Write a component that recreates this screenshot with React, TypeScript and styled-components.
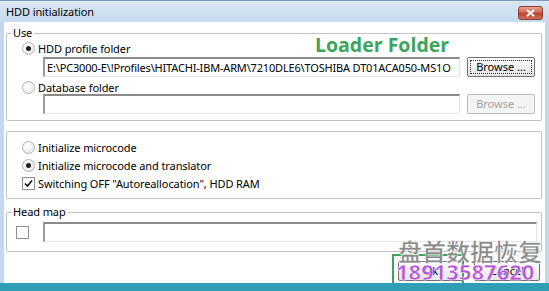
import React from "react";
import styled, { createGlobalStyle } from "styled-components";

const GlobalStyle = createGlobalStyle`
  html, body {
    margin: 0;
    padding: 0;
    background: #ffffff;
  }
  body {
    font-family: "Noto Sans", "Liberation Sans", sans-serif;
    font-size: 11px;
    color: #000;
  }
`;

const Window = styled.div`
  position: relative;
  width: 549px;
  height: 291px;
  box-sizing: border-box;
  display: flex;
  flex-direction: column;
  background: #c3d8ec;
  border-bottom: 8px solid #2f9fb6;
  overflow: hidden;
`;

const TitleBar = styled.div`
  height: 22px;
  flex: none;
  display: flex;
  align-items: center;
  justify-content: space-between;
  padding: 0 6px;
  background: linear-gradient(#d9e6f4, #c6daee);
  border-top: 1px solid #7f9db9;
  box-sizing: border-box;
`;

const Title = styled.div`
  font-size: 11px;
  letter-spacing: -0.1px;
  color: #000;
`;

const CloseButton = styled.div`
  width: 25px;
  height: 14px;
  margin-top: 3px;
  border: 1px solid #8a3a2e;
  border-radius: 3px;
  background: linear-gradient(#e8a493, #c9604a 50%, #b8402a 51%, #d0735c);
  display: flex;
  align-items: center;
  justify-content: center;
  box-sizing: border-box;
`;

const Client = styled.div`
  flex: 1;
  margin: 0 4px;
  padding: 4px 3px 0 2px;
  background: #ffffff;
  display: flex;
  flex-direction: column;
`;

const Group = styled.fieldset<{ $top?: number }>`
  margin: ${(p) => p.$top ?? 0}px 0 0 0;
  padding: 0;
  border: 1px solid #c2c2c2;
  border-radius: 2px;
  min-width: 0;
`;

const Legend = styled.legend`
  margin-left: 4px;
  padding: 0 2px;
  line-height: 14px;
  font-size: 11px;
  letter-spacing: -0.1px;
`;

const GroupBody = styled.div<{ $pad: string }>`
  display: flex;
  flex-direction: column;
  padding: ${(p) => p.$pad};
`;

const OptionRow = styled.div<{ $h: number }>`
  display: flex;
  align-items: center;
  gap: 3px;
  height: ${(p) => p.$h}px;
  font-size: 11px;
  letter-spacing: -0.1px;
  white-space: nowrap;
`;

const RadioMark = styled.span<{ $checked?: boolean }>`
  position: relative;
  width: 13px;
  height: 13px;
  flex: none;
  box-sizing: border-box;
  border-radius: 50%;
  border: 1px solid #b5b5b5;
  background: radial-gradient(circle at 40% 35%, #ffffff, #e3e3e3);

  &::after {
    content: "";
    display: ${(p) => (p.$checked ? "block" : "none")};
    position: absolute;
    left: 3px;
    top: 3px;
    width: 5px;
    height: 5px;
    border-radius: 50%;
    background: #1e1e1e;
  }
`;

const CheckMark = styled.span`
  width: 13px;
  height: 13px;
  flex: none;
  box-sizing: border-box;
  border: 1px solid #8e8f8f;
  background: #fff;
  display: flex;
  align-items: center;
  justify-content: center;
`;

const FieldRow = styled.div<{ $indent: number; $gap: number; $top?: number }>`
  display: flex;
  align-items: center;
  gap: ${(p) => p.$gap}px;
  padding-left: ${(p) => p.$indent}px;
  margin-top: ${(p) => p.$top ?? 0}px;
  height: 20px;
`;

const TextBox = styled.div`
  flex: 1;
  height: 20px;
  box-sizing: border-box;
  border-style: solid;
  border-width: 2px 1px 1px 2px;
  border-color: #8a8a8a #e2e2e2 #e6e6e6 #9a9a9a;
  background: #fff;
  padding: 0 2px;
  font-size: 11px;
  letter-spacing: -0.17px;
  line-height: 17px;
  white-space: nowrap;
  overflow: hidden;
`;

const Button = styled.div<{ $disabled?: boolean; $w?: number }>`
  position: relative;
  width: ${(p) => p.$w ?? 68}px;
  height: 20px;
  flex: none;
  box-sizing: border-box;
  border: 1px solid ${(p) => (p.$disabled ? "#b8bcbf" : "#707070")};
  border-radius: 2px;
  background: ${(p) =>
    p.$disabled ? "#f4f4f4" : "linear-gradient(#fdfdfd, #f0f0f0 50%, #e6e6e6)"};
  color: ${(p) => (p.$disabled ? "#a3a3a3" : "#000")};
  font-size: 11px;
  line-height: 12px;
  display: flex;
  align-items: center;
  justify-content: center;
`;

const FocusRing = styled.span`
  position: absolute;
  inset: 2px;
  border: 1px dotted #333;
`;

const ButtonRow = styled.div`
  display: flex;
  justify-content: flex-end;
  gap: 10px;
  margin-top: 9px;
  padding-right: 2px;
`;

const Annotation = styled.div`
  position: absolute;
  left: 315px;
  top: 31px;
  font-family: "Open Sans", "Noto Sans", sans-serif;
  font-weight: 700;
  font-size: 19.5px;
  color: #3ca55c;
  white-space: nowrap;
`;

const Highlight = styled.div`
  position: absolute;
  left: 392px;
  top: 254px;
  width: 72px;
  height: 31px;
  box-sizing: border-box;
  border: 2px solid #3fa35e;
`;

const WatermarkName = styled.div`
  position: absolute;
  left: 398px;
  top: 233px;
  font-family: "Noto Sans CJK SC", sans-serif;
  font-size: 24px;
  font-weight: 700;
  color: #8a8a8a;
  -webkit-text-stroke: 0.5px #ffffff;
  white-space: nowrap;
`;

const WatermarkPhone = styled.div`
  position: absolute;
  left: 396px;
  top: 256px;
  font-family: "Open Sans", "Noto Sans", sans-serif;
  font-size: 22px;
  font-weight: 700;
  color: #b553d6;
  -webkit-text-stroke: 0.5px #ffffff;
  white-space: nowrap;
`;

const Radio: React.FC<{ checked?: boolean; label: string; h: number }> = ({
  checked,
  label,
  h,
}) => (
  <OptionRow $h={h}>
    <RadioMark $checked={checked} />
    <span>{label}</span>
  </OptionRow>
);

const Tick = () => (
  <svg width="9" height="9" viewBox="0 0 9 9">
    <path d="M1 4.5 L3.5 7 L8 1.5" fill="none" stroke="#111" strokeWidth="1.6" />
  </svg>
);

export default function App() {
  return (
    <>
      <GlobalStyle />
      <Window>
        <TitleBar>
          <Title>HDD initialization</Title>
          <CloseButton>
            <svg width="9" height="8" viewBox="0 0 9 8">
              <path d="M1 1 L8 7 M8 1 L1 7" stroke="#fff" strokeWidth="2" />
            </svg>
          </CloseButton>
        </TitleBar>
        <Client>
          <Group>
            <Legend>Use</Legend>
            <GroupBody $pad="1px 6px 6px 15px">
              <Radio checked label="HDD profile folder" h={14} />
              <FieldRow $indent={21} $gap={7} $top={2}>
                <TextBox>
                  E:\PC3000-E\!Profiles\HITACHI-IBM-ARM\7210DLE6\TOSHIBA DT01ACA050-MS1O
                </TextBox>
                <Button>
                  <FocusRing />
                  Browse ...
                </Button>
              </FieldRow>
              <OptionRow $h={14} style={{ marginTop: 3 }}>
                <RadioMark />
                <span>Database folder</span>
              </OptionRow>
              <FieldRow $indent={21} $gap={7}>
                <TextBox />
                <Button $disabled>Browse ...</Button>
              </FieldRow>
            </GroupBody>
          </Group>
          <Group $top={10}>
            <GroupBody $pad="6px 6px 6px 15px">
              <Radio label="Initialize microcode" h={18} />
              <Radio checked label="Initialize microcode and translator" h={18} />
              <OptionRow $h={18}>
                <CheckMark>
                  <Tick />
                </CheckMark>
                <span>Switching OFF "Autoreallocation", HDD RAM</span>
              </OptionRow>
            </GroupBody>
          </Group>
          <Group $top={6}>
            <Legend>Head map</Legend>
            <GroupBody $pad="3px 4px 9px 9px">
              <FieldRow $indent={0} $gap={14}>
                <CheckMark />
                <TextBox />
              </FieldRow>
            </GroupBody>
          </Group>
          <ButtonRow>
            <Button $w={66}>Ok</Button>
            <Button $w={66}>Cancel</Button>
          </ButtonRow>
        </Client>
        <Annotation>Loader Folder</Annotation>
        <Highlight />
        <WatermarkName>盘首数据恢复</WatermarkName>
        <WatermarkPhone>18913587620</WatermarkPhone>
      </Window>
    </>
  );
}
